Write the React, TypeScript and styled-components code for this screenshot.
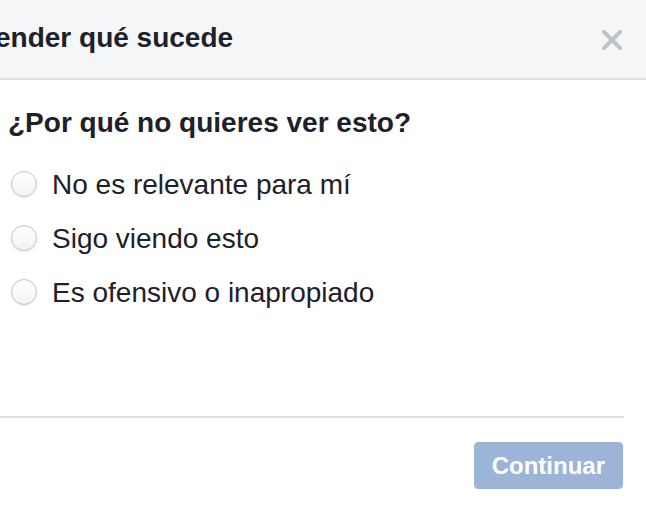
import React from 'react'
import styled, { createGlobalStyle } from 'styled-components'

const Colors = {
  Text: '#1d2129',
  HeaderBg: '#f5f6f7',
  Border: '#dddfe2',
  Close: '#bec2c9',
  ButtonDisabled: '#9cb4d8',
}

const GlobalStyle = createGlobalStyle`
  html, body {
    margin: 0;
    padding: 0;
    overflow: hidden;
    background: #fff;
    font-family: 'Liberation Sans', Arial, Helvetica, sans-serif;
    color: ${Colors.Text};
  }
`

const reasons = ['No es relevante para mí', 'Sigo viendo esto', 'Es ofensivo o inapropiado']

export default function App() {
  return (
    <>
      <GlobalStyle />
      <Dialog>
        <DialogHeader>
          <HeaderTitle>ender qué sucede</HeaderTitle>
          <CloseButton aria-label="Cerrar">
            <svg width="20" height="20" viewBox="0 0 20 20">
              <path d="M2 2 L18 18 M18 2 L2 18" stroke="currentColor" strokeWidth="4" strokeLinecap="square" />
            </svg>
          </CloseButton>
        </DialogHeader>
        <DialogBody>
          <Question>¿Por qué no quieres ver esto?</Question>
          <ReasonList>
            {reasons.map((reason) => (
              <ReasonRow key={reason}>
                <Radio type="radio" name="reason" />
                <ReasonLabel>{reason}</ReasonLabel>
              </ReasonRow>
            ))}
          </ReasonList>
        </DialogBody>
        <DialogFooter>
          <PrimaryButton disabled>Continuar</PrimaryButton>
        </DialogFooter>
      </Dialog>
    </>
  )
}

const Dialog = styled.section`
  display: flex;
  flex-direction: column;
  width: 674px;
  margin-left: -26px;
  background: #fff;
`

const DialogHeader = styled.header`
  display: flex;
  align-items: center;
  justify-content: space-between;
  box-sizing: border-box;
  height: 80px;
  padding: 0 26px 2px 21px;
  background: ${Colors.HeaderBg};
  border-bottom: 2px solid ${Colors.Border};
`

const HeaderTitle = styled.h2`
  margin: 0;
  font-size: 28px;
  line-height: 36px;
  font-weight: bold;
  white-space: nowrap;
`

const CloseButton = styled.button`
  display: flex;
  align-items: center;
  justify-content: center;
  width: 20px;
  height: 20px;
  padding: 0;
  margin-top: 4px;
  border: 0;
  background: transparent;
  color: ${Colors.Close};
  cursor: pointer;
`

const DialogBody = styled.div`
  display: flex;
  flex-direction: column;
  padding: 25px 24px 96px 34px;
`

const Question = styled.h3`
  margin: 0;
  font-size: 28px;
  line-height: 36px;
  font-weight: bold;
`

const ReasonList = styled.div`
  display: flex;
  flex-direction: column;
  margin-top: 17px;
`

const ReasonRow = styled.label`
  display: flex;
  align-items: center;
  gap: 15px;
  height: 54px;
  cursor: pointer;
`

const Radio = styled.input`
  appearance: none;
  flex: none;
  width: 26px;
  height: 26px;
  margin: -2px 0 0 3px;
  box-sizing: border-box;
  border-radius: 50%;
  border: 1px solid #c3c3c3;
  background: linear-gradient(#ffffff, #f3f3f3);
  box-shadow: 0 1px 1px rgba(0, 0, 0, 0.08);
`

const ReasonLabel = styled.span`
  font-size: 28px;
  line-height: 32px;
`

const DialogFooter = styled.footer`
  display: flex;
  justify-content: flex-end;
  margin-right: 24px;
  padding: 24px 1px 30px 0;
  border-top: 2px solid ${Colors.Border};
`

const PrimaryButton = styled.button`
  height: 47px;
  padding: 0 17px;
  border: 1px solid ${Colors.ButtonDisabled};
  border-radius: 4px;
  background: ${Colors.ButtonDisabled};
  color: #fff;
  font-family: 'Liberation Sans', Arial, Helvetica, sans-serif;
  font-size: 24px;
  font-weight: bold;
  line-height: 45px;
`
